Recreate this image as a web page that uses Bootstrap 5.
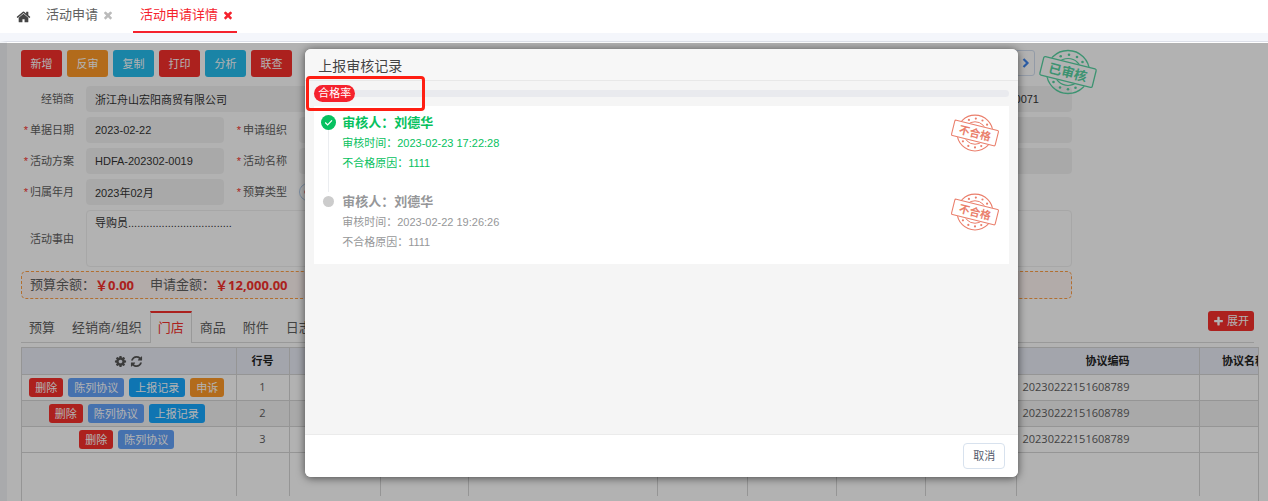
<!DOCTYPE html>
<html lang="zh-CN">
<head>
<meta charset="utf-8">
<meta name="viewport" content="width=device-width, initial-scale=1">
<title>活动申请详情</title>
<link href="https://cdn.jsdelivr.net/npm/bootstrap@5.3.0/dist/css/bootstrap.min.css" rel="stylesheet">
<script defer src="https://cdn.jsdelivr.net/npm/bootstrap@5.3.0/dist/js/bootstrap.bundle.min.js"></script>
<style>
  :root { --ui: "Liberation Sans", "Noto Sans CJK SC", sans-serif; --num: "Open Sans", "Noto Sans CJK SC", sans-serif; }
  body { font-family: var(--ui); font-size: 11px; line-height: 16px; color: #606060; }
  .ico { fill: currentColor; flex: none; }
  svg text { font-family: var(--ui); }

  /* window tabs */
  .page-tabs { height: 33px; font-size: 13px; }
  .page-tabs a { color: #606060; text-decoration: none; padding: 0 3px 2px 7px; border-bottom: 2px solid transparent; }
  .page-tabs a.active { color: #f5222d; border-bottom-color: #f5222d; }
  .page-strip { height: 8px; background: #f4f6fb; }

  /* work area */
  .work { border-top: 1px solid #dcdfe8; border-left: 7px solid #f2f4f7; padding: 8px 0 0 14px; }
  .act { color: #fff; border: 0; border-radius: 3px; font-size: 11px; line-height: 16px; padding: 2px 6px; }
  .act:hover { color: #fff; }
  .toolbar { margin-bottom: 9px; }
  .toolbar .act { width: 41px; height: 27px; }
  .c-red { background: #f7302c !important; }
  .c-orange { background: #ff9a28 !important; }
  .c-cyan { background: #26bdee !important; }
  .c-soft { background: #64a2f9 !important; }
  .c-blue { background: #16a8ff !important; }
  .pager { width: 26px; height: 26px; background: none; border: 1px solid #d3dff0; border-radius: 3px; margin-right: 37px; padding: 0 4px 0 0; color: #3f86ee; }
  .form-zone { margin-right: 196px; }
  .fields { display: grid; grid-template-columns: 65px 138px 75px 1fr 1fr; row-gap: 5px; }
  .fields label { text-align: right; padding-right: 12px; align-self: center; }
  .must::before { content: "*"; color: #f5302c; margin-right: 2px; }
  .fields .form-control { font-size: 11px; line-height: 16px; color: #333; height: 26px; min-height: 26px; padding: 4px 8px; background: #f3f3f3; border: 1px solid #f3f3f3; border-radius: 4px; }
  .fields textarea.form-control { height: 57px; background: transparent; border-color: #f0f0f0; resize: none; }
  .fields .doc-no { padding-right: 32px; }
  .span-a { grid-column: span 3; }
  .span-b { grid-column: span 4; }
  .pick { appearance: none; width: 18px; height: 18px; margin: 4px 0; border: 1px solid #b4cdec; border-radius: 50%; background: radial-gradient(circle, #f5302c 3px, transparent 4px); }
  .sums { height: 28px; margin-top: 4px; padding-left: 8px; border: 1px dashed #ff9f45; border-radius: 5px; background: #fff5f3; font-size: 13px; }
  .sums b { font-family: var(--num); color: #f5302c; }
  .stamp-ok { position: absolute; right: 170px; top: 6px; color: #58d3a3; }

  /* detail tabs */
  .sub-tabs { margin: 12px 14px 0 0; height: 32px; border-bottom: 1px solid #dcdcdc; font-size: 13px; font-family: var(--num); }
  .sub-tabs a { color: #606060; text-decoration: none; padding: 6px 8px; margin-right: 1px; height: 32px; border: 0 solid #dcdcdc; white-space: nowrap; line-height: 20px; }
  .sub-tabs a.active { color: #f5302c; background: #fff; border-width: 0 1px; border-top: 2px solid #f5302c; padding: 4px 7px; margin: 0 0 0 -1px; }
  .sub-tabs .act { height: 20px; padding: 2px 5px; gap: 3px; }

  .grid-box { margin: 4px 9px 0 0; border: 1px solid #d6d6d6; border-bottom: 0; }
  .grid { table-layout: fixed; min-width: 1267px; width: 100%; margin: 0; font-family: var(--num); }
  .grid th, .grid td { height: 26px; padding: 0 4px; text-align: center; vertical-align: middle; border-right: 1px solid #d6d6d6; border-bottom: 1px solid #d6d6d6; white-space: nowrap; color: #606060; line-height: 18px; }
  .grid th { background: #eaedf7; color: #222; }
  .grid tbody tr:nth-child(2) td { background: #f3f3f3; }
  .grid .act { line-height: 15px; height: 19px; }
  .grid .code { text-align: left; padding-left: 6px; }
  .grid .rest td { height: 44px; border-bottom: 0; }
  .grid td:first-child { padding: 0 6px 0 2px; }
  .btns { display: flex; justify-content: center; gap: 5px; }

  /* dialog over the dimmed work area */
  .shade { position: absolute; inset: 1px 0 0 -7px; background: rgba(0,0,0,.3); z-index: 5; padding: 6px 19.8% 24px 24.2%; }
  .dlg { border-radius: 6px; background: #f5f5f5; box-shadow: 0 1px 8px rgba(0,0,0,.6); overflow: hidden; }
  .dlg-head { height: 32px; padding: 6px 13px 0; font-size: 14px; line-height: 22px; background: #f7f7f7; border-bottom: 1px solid #e8e8e8; color: #444; }
  .dlg-body { padding: 4px 9px 0; }
  .rate { height: 17px; }
  .rate .bar { height: 7px; background: #e9eaee; border-radius: 0 4px 4px 0; }
  .rate .tag { background: #f5222d; color: #fff; border-radius: 9px; padding: 0 4px; line-height: 17px; }
  .callout-box { position: absolute; left: 1px; top: 27px; width: 119px; height: 35px; border: 3px solid #ff1e12; border-radius: 4px; }
  .log { background: #fff; margin-top: 4px; padding: 7px 9px 3px 7px; }
  .step { display: grid; grid-template-columns: 15px 1fr auto; column-gap: 6px; height: 79px; }
  .step + .step { height: 69px; }
  .rail { display: flex; flex-direction: column; align-items: center; }
  .rail::after { content: ""; width: 1px; flex: 1; background: #ebedf0; }
  .step:last-child .rail::after { display: none; }
  .rail svg { margin-top: 2px; }
  .rail .mark-dot { width: 11px; height: 11px; border-radius: 50%; background: #ccc; margin-top: 4px; }
  .who { font-size: 13px; line-height: 20px; font-weight: 700; }
  .note { line-height: 20px; }
  .done { color: #07c160; }
  .past { color: #969799; }
  .fail { color: #ea7f6c; }
  .dlg-foot { height: 43px; padding-right: 13px; background: #fff; border-top: 1px solid #ebebeb; }
  .cancel { width: 42px; height: 26px; padding: 0; font-size: 11px; border: 1px solid #d8e2ee; border-radius: 4px; color: #555b6b; background: #fff; }
</style>
</head>
<body class="vh-100 d-flex flex-column overflow-hidden bg-white">

<svg width="0" height="0" class="position-absolute" aria-hidden="true">
  <defs>
    <symbol id="i-x" viewBox="0 0 1792 1792"><path d="M1490 1322q0 40-28 68l-136 136q-28 28-68 28t-68-28l-294-294-294 294q-28 28-68 28t-68-28l-136-136q-28-28-28-68t28-68l294-294-294-294q-28-28-28-68t28-68l136-136q28-28 68-28t68 28l294 294 294-294q28-28 68-28t68 28l136 136q28 28 28 68t-28 68l-294 294 294 294q28 28 28 68z"/></symbol>
    <mask id="cut"><rect x="-30" y="-30" width="60" height="60" fill="#fff"/><rect x="-27" y="-10" width="54" height="20" rx="2" transform="rotate(14)" fill="#000"/></mask>
    <g id="seal" fill="none" stroke="currentColor">
      <g mask="url(#cut)">
        <circle r="21.500" stroke-width="1.300"/><circle r="13.500" stroke-width="1.200"/>
        <g fill="currentColor" stroke="none">
          <circle cx="-13" cy="-11.500" r="1.200"/><circle cx="-7.300" cy="-15.700" r="1.300"/><circle cx="1" cy="-17.300" r="1.300"/><circle cx="9" cy="-15" r="1.300"/><circle cx="14.500" cy="-10" r="1.300"/>
          <circle cx="13" cy="11.500" r="1.200"/><circle cx="7.500" cy="15.700" r="1.300"/><circle cx="0" cy="17.300" r="1.300"/><circle cx="-8" cy="15.500" r="1.300"/><circle cx="-14.500" cy="10" r="1.300"/>
        </g>
      </g>
      <rect x="-27" y="-9.500" width="54" height="19" rx="1.500" stroke-width="1.300" transform="rotate(14)"/>
    </g>
  </defs>
</svg>

<nav class="page-tabs d-flex align-items-stretch ps-3 flex-shrink-0">
  <svg class="ico align-self-center me-2" width="15" height="28" viewBox="0 0 1792 1792" style="color:#444"><path d="M1472 992v480q0 26-19 45t-45 19h-384v-384h-256v384h-384q-26 0-45-19t-19-45v-480q0-1 .5-3t.5-3l575-474 575 474q1 2 1 6zm223-69l-62 74q-8 9-21 11h-3q-13 0-21-7l-692-577-692 577q-12 8-24 7-13-2-21-11l-62-74q-8-10-7-23.500t11-21.500l719-599q32-26 76-26t76 26l244 204v-195q0-14 9-23t23-9h192q14 0 23 9t9 23v408l219 182q10 8 11 21.500t-7 23.500z"/></svg>
  <a href="#" class="d-flex align-items-center gap-1 me-3"><span>活动申请</span><svg class="ico" width="12" height="12" style="color:#bbb"><use href="#i-x"/></svg></a>
  <a href="#" class="active d-flex align-items-center gap-1"><span>活动申请详情</span><svg class="ico" width="12" height="12"><use href="#i-x"/></svg></a>
</nav>
<div class="page-strip flex-shrink-0"></div>

<main class="work position-relative flex-grow-1 d-flex flex-column">
  <div class="form-zone">
    <div class="toolbar d-flex justify-content-between">
      <div class="d-flex" style="gap:5px">
        <button class="btn act c-red p-0">新增</button><button class="btn act c-orange p-0">反审</button><button class="btn act c-cyan p-0">复制</button><button class="btn act c-red p-0">打印</button><button class="btn act c-cyan p-0">分析</button><button class="btn act c-red p-0">联查</button>
      </div>
      <button class="pager d-flex align-items-center justify-content-end" aria-label="下一条"><svg width="8" height="10" viewBox="0 0 8 10" fill="none" stroke="currentColor" stroke-width="2.200"><path d="M1.500 1 5.500 5 1.500 9"/></svg></button>
    </div>
    <form class="fields">
      <label for="f1">经销商</label><input id="f1" class="form-control span-a" value="浙江舟山宏阳商贸有限公司" readonly><input class="form-control doc-no text-end" aria-label="单据编号" value="0071" readonly>
      <label for="f2" class="must">单据日期</label><input id="f2" class="form-control" value="2023-02-22" readonly><label for="f3" class="must">申请组织</label><input id="f3" class="form-control" readonly><input class="form-control" aria-label="部门" readonly>
      <label for="f4" class="must">活动方案</label><input id="f4" class="form-control" value="HDFA-202302-0019" readonly><label for="f5" class="must">活动名称</label><input id="f5" class="form-control" readonly><input class="form-control" aria-label="日期" readonly>
      <label for="f6" class="must">归属年月</label><input id="f6" class="form-control" value="2023年02月" readonly><label for="f7" class="must">预算类型</label><input id="f7" type="radio" class="pick" checked><span></span>
      <label for="f8">活动事由</label><textarea id="f8" class="form-control span-b" readonly>导购员..................................</textarea>
    </form>
    <div class="sums d-flex align-items-center"><span>预算余额：</span><b>￥0.00</b><span class="ms-3">申请金额：</span><b>￥12,000.00</b></div>
  </div>
  <svg class="stamp-ok" width="60" height="48" viewBox="-30 -24 60 48"><use href="#seal"/><text transform="rotate(14)" text-anchor="middle" y="5" font-size="13" font-weight="700" fill="currentColor">已审核</text></svg>

  <nav class="sub-tabs d-flex">
    <a href="#">预算</a><a href="#">经销商/组织</a><a href="#" class="active">门店</a><a href="#">商品</a><a href="#">附件</a><a href="#">日志</a>
    <button class="btn act c-red ms-auto d-flex align-items-center align-self-start"><svg class="ico" width="11" height="11" viewBox="0 0 1792 1792"><path d="M1600 736v192q0 40-28 68t-68 28h-416v416q0 40-28 68t-68 28h-192q-40 0-68-28t-28-68v-416h-416q-40 0-68-28t-28-68v-192q0-40 28-68t68-28h416v-416q0-40 28-68t68-28h192q40 0 68 28t28 68v416h416q40 0 68 28t28 68z"/></svg>展开</button>
  </nav>

  <div class="grid-box overflow-hidden flex-grow-1">
    <table class="grid">
      <colgroup><col style="width:214px"><col style="width:53px"><col style="width:91px"><col style="width:88px"><col style="width:189px"><col style="width:90px"><col style="width:89px"><col style="width:89px"><col style="width:91px"><col style="width:183px"><col style="width:90px"></colgroup>
      <thead><tr>
        <th><svg class="ico" width="13" height="13" viewBox="0 0 1792 1792" fill-rule="evenodd" style="color:#555"><path d="M1152 896q0-106-75-181t-181-75-181 75-75 181 75 181 181 75 181-75 75-181zm512-109v222q0 12-8 23t-20 13l-185 28q-19 54-39 91 35 50 107 138 10 12 10 25t-9 23q-27 37-99 108t-94 71q-12 0-26-9l-138-108q-44 23-91 38-16 136-29 186-7 28-36 28h-222q-14 0-24.500-8.500t-11.500-21.500l-28-184q-49-16-90-37l-141 107q-10 9-25 9-14 0-25-11-126-114-165-168-7-10-7-23 0-12 8-23 15-21 51-66.500t54-70.500q-27-50-41-99l-183-27q-13-2-21-12.500t-8-23.500v-222q0-12 8-23t19-13l186-28q14-46 39-92-40-57-107-138-10-12-10-24 0-10 9-23 26-36 98.500-107.500t94.500-71.500q13 0 26 10l138 107q44-23 91-38 16-136 29-186 7-28 36-28h222q14 0 24.500 8.500t11.500 21.500l28 184q49 16 90 37l142-107q9-9 24-9 13 0 25 10 129 119 165 170 7 8 7 22 0 12-8 23-15 21-51 66.500t-54 70.500q26 50 41 98l183 28q13 2 21 12.500t8 23.500z"/></svg>
        <svg class="ico" width="13" height="13" viewBox="0 0 1792 1792" style="color:#555"><path d="M1639 1056q0 5-1 7-64 268-268 434.500t-478 166.500q-146 0-282.500-55t-243.500-157l-129 129q-19 19-45 19t-45-19-19-45v-448q0-26 19-45t45-19h448q26 0 45 19t19 45-19 45l-137 137q71 66 161 102t187 36q134 0 250-65t186-179q11-17 53-117 8-23 30-23h192q13 0 22.500 9.500t9.500 22.500zm25-800v448q0 26-19 45t-45 19h-448q-26 0-45-19t-19-45 19-45l138-138q-148-137-349-137-134 0-250 65t-186 179q-11 17-53 117-8 23-30 23h-199q-13 0-22.500-9.500t-9.500-22.500v-7q65-268 270-434.500t480-166.500q146 0 284 55.500t245 156.500l130-129q19-19 45-19t45 19 19 45z"/></svg></th>
        <th>行号</th><th></th><th></th><th></th><th></th><th></th><th></th><th></th><th>协议编码</th><th>协议名称</th>
      </tr></thead>
      <tbody>
        <tr><td><div class="btns"><button class="btn act c-red">删除</button><button class="btn act c-soft">陈列协议</button><button class="btn act c-blue">上报记录</button><button class="btn act c-orange">申诉</button></div></td><td>1</td><td></td><td></td><td></td><td></td><td></td><td></td><td></td><td class="code">20230222151608789</td><td></td></tr>
        <tr><td><div class="btns"><button class="btn act c-red">删除</button><button class="btn act c-soft">陈列协议</button><button class="btn act c-blue">上报记录</button></div></td><td>2</td><td></td><td></td><td></td><td></td><td></td><td></td><td></td><td class="code">20230222151608789</td><td></td></tr>
        <tr><td><div class="btns"><button class="btn act c-red">删除</button><button class="btn act c-soft">陈列协议</button></div></td><td>3</td><td></td><td></td><td></td><td></td><td></td><td></td><td></td><td class="code">20230222151608789</td><td></td></tr>
        <tr class="rest"><td></td><td></td><td></td><td></td><td></td><td></td><td></td><td></td><td></td><td></td><td></td></tr>
      </tbody>
    </table>
  </div>

  <div class="shade">
    <section class="dlg position-relative h-100 d-flex flex-column" role="dialog" aria-labelledby="dt">
      <header class="dlg-head" id="dt">上报审核记录</header>
      <div class="dlg-body flex-grow-1">
        <div class="rate d-flex align-items-center"><span class="tag">合格率</span><div class="bar flex-grow-1"></div></div>
        <div class="log">
          <div class="step done">
            <div class="rail"><svg class="flex-shrink-0" width="15" height="15" viewBox="0 0 15 15"><circle cx="7.500" cy="7.500" r="7.500" fill="#07c160"/><path d="M4.200 7.500 6.600 9.900 11 5.300" fill="none" stroke="#fff" stroke-width="1.200"/></svg></div>
            <div><div class="who">审核人：刘德华</div><div class="note">审核时间：2023-02-23 17:22:28</div><div class="note">不合格原因：1111</div></div>
            <svg class="fail" width="50" height="40" viewBox="-30 -24 60 48"><use href="#seal"/><text transform="rotate(14)" text-anchor="middle" y="5" font-size="13" font-weight="700" fill="currentColor">不合格</text></svg>
          </div>
          <div class="step past">
            <div class="rail"><span class="mark-dot"></span></div>
            <div><div class="who">审核人：刘德华</div><div class="note">审核时间：2023-02-22 19:26:26</div><div class="note">不合格原因：1111</div></div>
            <svg class="fail" width="50" height="40" viewBox="-30 -24 60 48"><use href="#seal"/><text transform="rotate(14)" text-anchor="middle" y="5" font-size="13" font-weight="700" fill="currentColor">不合格</text></svg>
          </div>
        </div>
      </div>
      <footer class="dlg-foot d-flex align-items-center justify-content-end"><button class="btn cancel">取消</button></footer>
      <div class="callout-box"></div>
    </section>
  </div>
</main>
</body>
</html>
